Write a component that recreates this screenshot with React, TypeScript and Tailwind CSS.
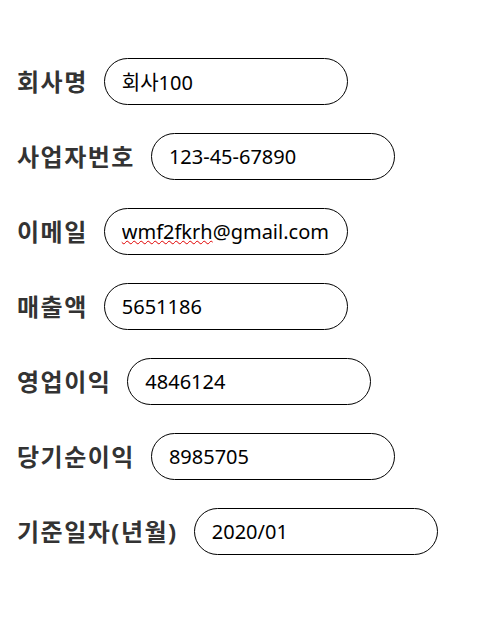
import React from "react";

const rows: { label: string; value: string; spell?: string }[] = [
  { label: "회사명", value: "회사100" },
  { label: "사업자번호", value: "123-45-67890" },
  { label: "이메일", value: "wmf2fkrh@gmail.com", spell: "wmf2fkrh" },
  { label: "매출액", value: "5651186" },
  { label: "영업이익", value: "4846124" },
  { label: "당기순이익", value: "8985705" },
  { label: "기준일자(년월)", value: "2020/01" },
];

export default function App() {
  return (
    <div
      className="min-h-[617px] w-[498px] bg-white pt-[58px] pl-[17px]"
      style={{ fontFamily: '"Noto Sans", "Noto Sans CJK KR", sans-serif' }}
    >
      <div className="flex flex-col gap-[28px]">
        {rows.map((r) => (
          <div key={r.label} className="flex items-center gap-[16px]">
            <label className="text-[24px] font-bold leading-none tracking-[1.5px] text-[#333333]">
              {r.label}
            </label>
            <div className="relative">
              <input
                readOnly
                spellCheck={false}
                defaultValue={r.value}
                className="box-border h-[47px] w-[244px] rounded-full border border-black bg-white pl-[17px] text-[20px] text-black outline-none"
                style={{ fontFamily: '"Noto Sans", "Noto Sans CJK KR", sans-serif' }}
              />
              {r.spell && (
                <span
                  className="pointer-events-none absolute left-[18px] top-[8px] text-[20px] text-transparent underline decoration-wavy decoration-[#e00000] decoration-1 underline-offset-[2px]"
                  style={{ fontFamily: '"Noto Sans", "Noto Sans CJK KR", sans-serif' }}
                >
                  {r.spell}
                </span>
              )}
            </div>
          </div>
        ))}
      </div>
    </div>
  );
}
